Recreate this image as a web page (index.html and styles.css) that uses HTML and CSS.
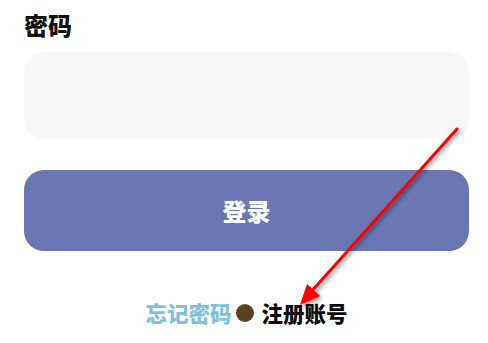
FILE: index.html
```html
<!DOCTYPE html>
<html lang="zh-CN">
<head>
<meta charset="utf-8">
<title>登录</title>
<link rel="stylesheet" href="styles.css">
</head>
<body>
<main class="page">
  <h2 class="label">密码</h2>
  <div class="input"></div>
  <button class="login" type="button">登录</button>
  <div class="links">
    <span class="forgot">忘记密码</span>
    <span class="dot"></span>
    <span class="register">注册账号</span>
  </div>
</main>
<svg class="arrow" width="488" height="343" viewBox="0 0 488 343" aria-hidden="true">
  <line x1="457" y1="129" x2="310" y2="293" stroke="#ff0000" stroke-width="3" stroke-linecap="round"/>
  <polygon points="300,305 320,296 307,284" fill="#ff0000"/>
</svg>
</body>
</html>
```
FILE: styles.css
```css
html, body {
  margin: 0;
  padding: 0;
  background: #ffffff;
}
body {
  width: 488px;
  height: 343px;
  overflow: hidden;
  position: relative;
  font-family: "Noto Sans CJK SC", "Noto Sans", sans-serif;
}
.page {
  padding: 8px 19px 0 24px;
  display: flex;
  flex-direction: column;
}
.label {
  margin: 0;
  font-size: 24px;
  line-height: 33px;
  font-weight: 900;
  color: #111111;
}
.input {
  margin-top: 11px;
  height: 87px;
  background: #f7f7f7;
  border-radius: 20px;
}
.login {
  margin-top: 31px;
  height: 81px;
  border: 0;
  border-radius: 20px;
  background: #6b77b3;
  color: #ffffff;
  font-family: inherit;
  font-size: 24px;
  font-weight: 900;
  padding: 0;
}
.links {
  margin-top: 47px;
  display: flex;
  justify-content: center;
  align-items: center;
  height: 30px;
  font-size: 21.5px;
  font-weight: 900;
  line-height: 30px;
}
.forgot {
  color: #7fc1dd;
}
.dot {
  width: 18px;
  height: 18px;
  border-radius: 50%;
  background: #5b4120;
  margin: 0 8px 0 4px;
}
.register {
  color: #0a0a0a;
}
.arrow {
  position: absolute;
  left: 0;
  top: 0;
  filter: drop-shadow(2px 2px 2px rgba(0, 0, 0, 0.45));
}
```
